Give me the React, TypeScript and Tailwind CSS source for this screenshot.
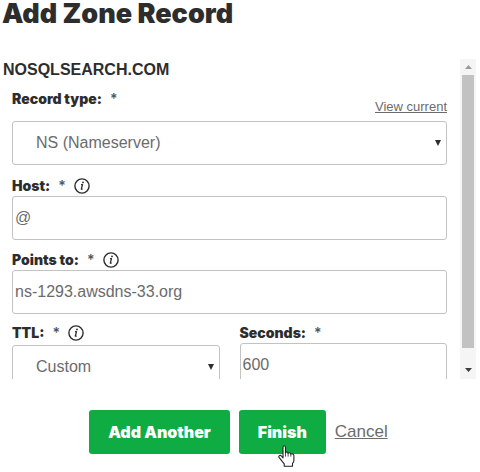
import type { ReactNode } from "react";

const control =
  "block h-11 w-full appearance-none rounded-[3px] border border-[#c2c2c2] bg-white text-base text-[#6b6b6b] outline-none";

function InfoButton({ about }: { about: string }) {
  return (
    <button type="button" aria-label={`About ${about}`} className="ml-2 text-[#2d2d2d]">
      <svg viewBox="0 0 16 16" className="block size-4" fill="none" stroke="currentColor">
        <circle cx="8" cy="8" r="7.1" strokeWidth="1.4" />
        <path d="M7 6.6h1.5L7.3 11.2h1.4" strokeWidth="1.3" strokeLinejoin="round" />
        <circle cx="9" cy="4.4" r=".9" fill="currentColor" stroke="none" />
      </svg>
    </button>
  );
}

function Label({ id, children, info }: { id: string; children: string; info?: boolean }) {
  return (
    <div className="flex h-5 items-center">
      <label htmlFor={id} className="font-[Inter,sans-serif] text-sm leading-5 font-black text-[#2d2d2d]">
        {children}
        <span className="ml-2 font-semibold text-[#555]">*</span>
      </label>
      {info && <InfoButton about={children.replace(":", "")} />}
    </div>
  );
}

function Select({ id, children }: { id: string; children: ReactNode }) {
  return (
    <div className="relative">
      <select id={id} className={`${control} pr-6 pl-[23px]`}>
        {children}
      </select>
      <svg viewBox="0 0 6 6" className="pointer-events-none absolute top-[19px] right-[6px] size-[6px] fill-[#2d2d2d]">
        <path d="M0 0h6L3 6z" />
      </svg>
    </div>
  );
}

function Scrollbar() {
  return (
    <div className="flex w-4 flex-col bg-[#f5f5f5]" aria-hidden="true">
      <div className="flex h-4 items-center justify-center">
        <svg viewBox="0 0 7 4" className="h-1 w-[7px] fill-[#9a9a9f]">
          <path d="M0 4L3.5 0 7 4z" />
        </svg>
      </div>
      <div className="mx-[2px] flex-1 bg-[#c1c2c1]" />
      <div className="flex h-[31px] items-end justify-center pb-[7px]">
        <svg viewBox="0 0 7 4" className="h-1 w-[7px] fill-[#3c3c3c]">
          <path d="M0 0h7L3.5 4z" />
        </svg>
      </div>
    </div>
  );
}

function HandCursor() {
  return (
    <svg
      viewBox="0 0 17 22"
      className="pointer-events-none absolute top-[35px] left-[39px] h-[22px] w-[17px]"
      fill="#fff"
      stroke="#222"
      strokeWidth="1.1"
      strokeLinejoin="round"
      aria-hidden="true"
    >
      <path d="M5 13V2.2Q5 .8 6.2.8T7.5 2.2V8Q7.6 7 8.8 7t1.3 1.4Q10.3 7.8 11.4 7.8t1.4 1.4q.3-.5 1.3-.4 1.8.2 1.8 1.8v4.6q0 1.8-1.4 3.2v2.8H6.2v-2.4L1.2 12.6Q.4 11.4 1.4 10.6q1-.7 2 .4z" />
      <path d="M7.5 8v3.6M10.1 8.4v3.2M12.8 9.2v2.4" strokeWidth=".8" fill="none" />
    </svg>
  );
}

const action =
  "h-11 rounded-[3px] bg-[#0fab43] px-[19px] font-[Inter,sans-serif] text-base font-black text-white";

export default function App() {
  return (
    <main className="bg-white pb-4 font-['Liberation_Sans',Arial,sans-serif]">
      <h1 className="pl-[2px] font-[Inter,sans-serif] text-[27px] leading-7 font-black text-[#2d2d2d]">
        Add Zone Record
      </h1>

      <form>
        <div className="mt-[31px] mr-1 ml-[3px] flex h-80 overflow-hidden">
          <div className="flex-1 pr-[13px]">
            <h2 className="text-base leading-[22px] font-bold text-[#2d2d2d]">NOSQLSEARCH.COM</h2>

            <div className="pl-[9px]">
              <div className="flex h-10 justify-between pt-2">
                <Label id="type">Record type:</Label>
                <a href="#current" className="pt-2 text-[13px] leading-5 text-[#6b6b6b] underline">
                  View current
                </a>
              </div>
              <Select id="type">
                <option>NS (Nameserver)</option>
              </Select>

              <div className="pt-[11px]">
                <Label id="host" info>Host:</Label>
              </div>
              <input id="host" defaultValue="@" className={`${control} pl-[2px]`} />

              <div className="pt-[10px]">
                <Label id="target" info>Points to:</Label>
              </div>
              <input id="target" defaultValue="ns-1293.awsdns-33.org" className={`${control} pl-[2px]`} />

              <div className="grid grid-cols-2 gap-5 pt-[9px]">
                <div className="flex flex-col gap-[2px]">
                  <Label id="ttl" info>TTL:</Label>
                  <Select id="ttl">
                    <option>Custom</option>
                  </Select>
                </div>
                <div>
                  <Label id="seconds">Seconds:</Label>
                  <input id="seconds" defaultValue="600" className={`${control} pl-[2px]`} />
                </div>
              </div>
            </div>
          </div>
          <Scrollbar />
        </div>

        <div className="mt-[31px] flex items-center justify-center gap-[9px] pr-[3px]">
          <button type="button" className={action}>
            Add Another
          </button>
          <div className="relative">
            <button type="submit" className={action}>
              Finish
            </button>
            <HandCursor />
          </div>
          <a href="#cancel" className="text-[17px] text-[#6b6b6b] underline">
            Cancel
          </a>
        </div>
      </form>
    </main>
  );
}
